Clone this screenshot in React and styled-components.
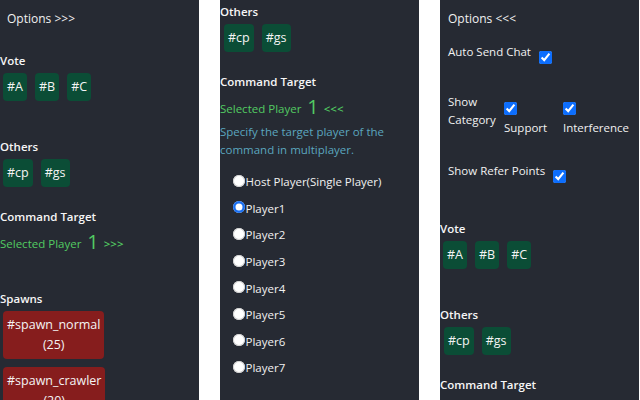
import React from 'react';
import styled, { createGlobalStyle } from 'styled-components';

const Global = createGlobalStyle`
  html, body { margin: 0; padding: 0; background: #ffffff; }
  body { font-family: "Open Sans", "Noto Sans", sans-serif; }
  * { box-sizing: border-box; }
`;

const Board = styled.div`
  display: flex;
  gap: 21px;
  width: 640px;
  height: 400px;
  overflow: hidden;
  background: #ffffff;
`;

const Panel = styled.div`
  flex: 0 0 199px;
  width: 199px;
  height: 400px;
  overflow: hidden;
  background: #262a33;
  color: #f1f1f1;
  font-size: 11.5px;
  line-height: 18px;
  padding-top: ${(p) => p.$top || 0}px;
`;

const Toggle = styled.div`
  height: 37px;
  padding: 10px 0 0 ${(p) => p.$padLeft || 7}px;
  font-size: 12px;
  line-height: 18px;
  margin-bottom: ${(p) => p.$mb || 0}px;
`;

const Section = styled.section`
  margin-bottom: ${(p) => p.$mb || 0}px;
`;

const Title = styled.div`
  font-weight: 600;
  line-height: 18px;
  color: #f6f6f6;
`;

const ButtonRow = styled.div`
  display: flex;
  flex-wrap: wrap;
  gap: 8px;
  padding: 3px 0 0 ${(p) => p.$left || 3}px;
`;

const TagButton = styled.button`
  font-family: inherit;
  font-size: 12.5px;
  line-height: 20px;
  padding: 4px;
  border: none;
  border-radius: 4px;
  color: #f4f4f4;
  text-align: center;
  background: ${(p) => (p.$red ? '#861d1d' : '#0b4d36')};
`;

const SelectedLine = styled.div`
  color: #52cb62;
  line-height: 24px;
  margin-top: 4px;
`;

const BigNum = styled.span`
  font-size: 20px;
  margin: 0 5px 0 6px;
  vertical-align: -1px;
`;

const Arrows = styled.span`
  font-weight: 600;
`;

const Description = styled.div`
  color: #5ba6bf;
  line-height: 18px;
  margin-top: 2px;
  padding-right: 8px;
`;

const RadioList = styled.div`
  margin-top: 10px;
  padding-left: 12.5px;
`;

const RadioItem = styled.label`
  display: flex;
  align-items: center;
  height: 26.6px;
  color: #f1f1f1;
`;

const Radio = styled.input.attrs({ type: 'radio', name: 'target' })`
  appearance: none;
  width: 12px;
  height: 12px;
  margin: -3px 1px 0 0;
  border-radius: 50%;
  background: #ffffff;
  box-shadow: inset 0 0 0 1px #cfcfcf;
  &:checked {
    box-shadow: inset 0 0 0 2.5px #1a6ff0;
  }
`;

const OptionRow = styled.div`
  display: flex;
  align-items: flex-start;
  gap: 8px;
  padding: 0 8px;
  margin-bottom: ${(p) => p.$mb || 0}px;
`;

const OptionLabel = styled.div`
  flex: 0 0 auto;
  width: ${(p) => (p.$w ? `${p.$w}px` : 'auto')};
  line-height: 18px;
  color: #f1f1f1;
`;

const Check = styled.input.attrs({ type: 'checkbox' })`
  width: 13px;
  height: 13px;
  margin: ${(p) => p.$mt || 8}px 0 0 0;
  accent-color: #0d6efd;
  flex: 0 0 auto;
`;

const CheckGroup = styled.div`
  display: flex;
  flex-direction: column;
  align-items: flex-start;
  gap: 4px;
  min-width: 51px;
`;

const OptionsToggle = ({ dir, mb }) => (
  <Toggle $mb={mb} $padLeft={dir === 'open' ? 8 : 7}>
    Options {dir === 'open' ? '<<<' : '>>>'}
  </Toggle>
);

const VoteSection = () => (
  <Section $mb={37}>
    <Title>Vote</Title>
    <ButtonRow>
      <TagButton>#A</TagButton>
      <TagButton>#B</TagButton>
      <TagButton>#C</TagButton>
    </ButtonRow>
  </Section>
);

const OthersSection = ({ left }) => (
  <Section $mb={21}>
    <Title>Others</Title>
    <ButtonRow $left={left}>
      <TagButton>#cp</TagButton>
      <TagButton>#gs</TagButton>
    </ButtonRow>
  </Section>
);

const SelectedPlayer = ({ arrows }) => (
  <SelectedLine>
    Selected Player<BigNum>1</BigNum>
    <Arrows>{arrows}</Arrows>
  </SelectedLine>
);

const players = ['Host Player(Single Player)', 'Player1', 'Player2', 'Player3', 'Player4', 'Player5', 'Player6', 'Player7'];

export default function App() {
  return (
    <>
      <Global />
      <Board>
        <Panel>
          <OptionsToggle dir="closed" mb={15} />
          <VoteSection />
          <OthersSection />
          <Section $mb={34}>
            <Title>Command Target</Title>
            <SelectedPlayer arrows=">>>" />
          </Section>
          <Section>
            <Title>Spawns</Title>
            <ButtonRow>
              <TagButton $red>
                #spawn_normal
                <br />
                (25)
              </TagButton>
              <TagButton $red>
                #spawn_crawler
                <br />
                (20)
              </TagButton>
            </ButtonRow>
          </Section>
        </Panel>

        <Panel $top={3}>
          <OthersSection left={4} />
          <Section>
            <Title>Command Target</Title>
            <SelectedPlayer arrows="<<<" />
            <Description>Specify the target player of the command in multiplayer.</Description>
            <RadioList>
              {players.map((p, i) => (
                <RadioItem key={p}>
                  <Radio defaultChecked={i === 1} />
                  {p}
                </RadioItem>
              ))}
            </RadioList>
          </Section>
        </Panel>

        <Panel>
          <OptionsToggle dir="open" mb={6} />
          <OptionRow $mb={29}>
            <OptionLabel>Auto Send Chat</OptionLabel>
            <Check defaultChecked />
          </OptionRow>
          <OptionRow $mb={25}>
            <OptionLabel $w={48}>Show Category</OptionLabel>
            <CheckGroup>
              <Check defaultChecked $mt={9} />
              <OptionLabel>Support</OptionLabel>
            </CheckGroup>
            <CheckGroup>
              <Check defaultChecked $mt={9} />
              <OptionLabel>Interference</OptionLabel>
            </CheckGroup>
          </OptionRow>
          <OptionRow $mb={37}>
            <OptionLabel>Show Refer Points</OptionLabel>
            <Check defaultChecked />
          </OptionRow>
          <VoteSection />
          <OthersSection left={4} />
          <Section>
            <Title>Command Target</Title>
          </Section>
        </Panel>
      </Board>
    </>
  );
}
